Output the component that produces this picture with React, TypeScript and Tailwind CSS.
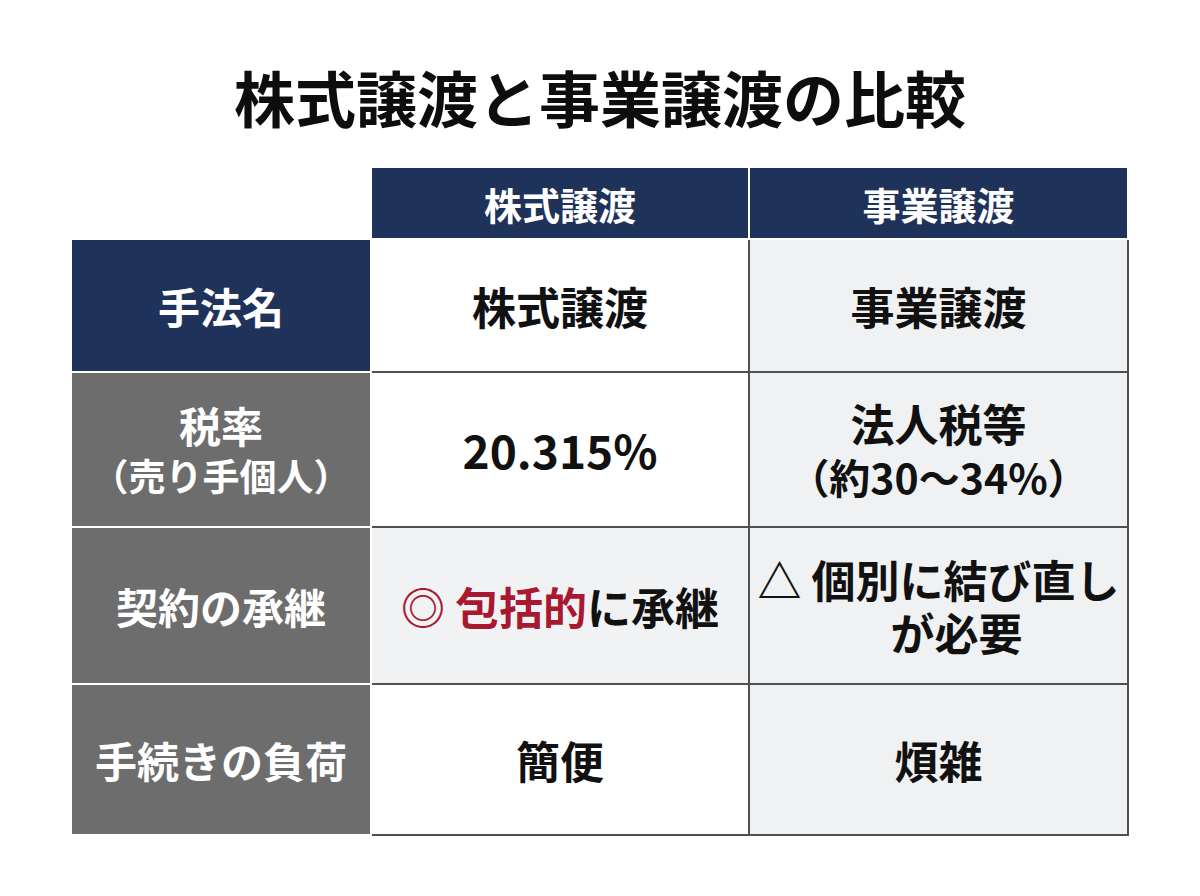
import type { ReactNode } from 'react'

type Row = {
  label: ReactNode
  labelBg: string
  height: string
  left: ReactNode
  leftBg: string
  right: ReactNode
}

const rows: Row[] = [
  {
    label: '手法名',
    labelBg: 'bg-[#1f3259]',
    height: 'h-[133px]',
    left: '株式譲渡',
    leftBg: 'bg-white',
    right: '事業譲渡',
  },
  {
    label: (
      <>
        <div className="leading-[50px]">税率</div>
        <div className="text-[37px] leading-[50px]">（売り手個人）</div>
      </>
    ),
    labelBg: 'bg-[#6d6d6d]',
    height: 'h-[155px]',
    left: <span className="text-[46px]">20.315%</span>,
    leftBg: 'bg-white',
    right: (
      <>
        <div className="leading-[53px]">法人税等</div>
        <div className="text-[41px] leading-[53px]">（約30〜34%）</div>
      </>
    ),
  },
  {
    label: '契約の承継',
    labelBg: 'bg-[#6d6d6d]',
    height: 'h-[157px]',
    left: (
      <>
        <span className="text-[#a8182f]">◎ 包括的</span>に承継
      </>
    ),
    leftBg: 'bg-[#f1f2f4]',
    right: (
      <>
        <div className="leading-[53px]">△ 個別に結び直し</div>
        <div className="pl-[36px] leading-[53px]">が必要</div>
      </>
    ),
  },
  {
    label: '手続きの負荷',
    labelBg: 'bg-[#6d6d6d]',
    height: 'h-[151px]',
    left: '簡便',
    leftBg: 'bg-white',
    right: '煩雑',
  },
]

export default function App() {
  return (
    <div
      className="min-h-[896px] w-[1200px] bg-white"
      style={{ fontFamily: '"Noto Sans CJK JP", "Noto Sans", sans-serif' }}
    >
      <h1 className="pt-[66px] text-center text-[61px] font-bold leading-[61px] text-[#0d0d0d]">
        株式譲渡と事業譲渡の比較
      </h1>

      <div className="ml-[72px] mt-[41px] grid grid-cols-[300px_378px_379px]">
        {/* header */}
        <div className="h-[72px]" />
        <div className="mr-[2px] mb-[2px] flex items-center justify-center bg-[#1f3259] text-[38px] font-bold text-white">
          株式譲渡
        </div>
        <div className="mr-[2px] mb-[2px] flex items-center justify-center bg-[#1f3259] text-[38px] font-bold text-white">
          事業譲渡
        </div>

        {rows.map((r, i) => (
          <div key={i} className="contents">
            <div
              className={`${r.height} ${r.labelBg} mr-[2px] flex items-center justify-center border-b-2 border-white text-center text-[42px] font-bold text-white`}
            >
              <div>{r.label}</div>
            </div>
            <div
              className={`${r.height} ${r.leftBg} flex items-center justify-center border-r-2 border-b-2 border-[#505050] text-center text-[44px] font-bold text-[#111]`}
            >
              <div>{r.left}</div>
            </div>
            <div
              className={`${r.height} flex items-center justify-center border-r-2 border-b-2 border-[#505050] bg-[#f0f1f3] text-center text-[44px] font-bold text-[#111]`}
            >
              <div>{r.right}</div>
            </div>
          </div>
        ))}
      </div>
    </div>
  )
}
